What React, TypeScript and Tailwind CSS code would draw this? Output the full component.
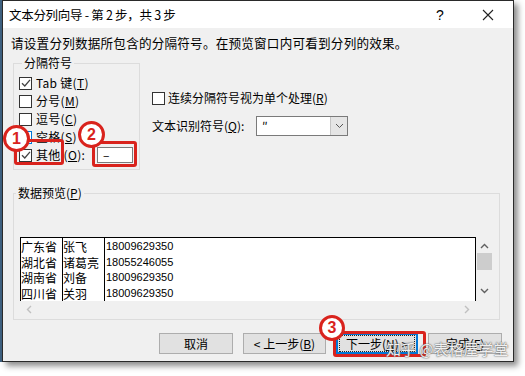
const font = "font-['Noto_Sans_CJK_SC','Noto_Sans',sans-serif]"

const U = ({ c }: { c: string }) => <span className="underline">{c}</span>

function Box({ checked = false, hover = false }: { checked?: boolean; hover?: boolean }) {
  return (
    <div className={`w-[13px] h-[13px] shrink-0 bg-white border ${hover ? 'border-[#0078d7]' : 'border-[#333]'} flex items-center justify-center`}>
      {checked && (
        <svg width="10" height="10" viewBox="0 0 10 10">
          <path d="M1 5.2 L3.8 8 L9 1.8" fill="none" stroke="#444" strokeWidth="1.3" />
        </svg>
      )}
    </div>
  )
}

function Check({ checked, hover, children }: { checked?: boolean; hover?: boolean; children: React.ReactNode }) {
  return (
    <div className="flex items-center h-[18px] gap-[4px] text-[12px] leading-[16px] tracking-[0.3px]">
      <Box checked={checked} hover={hover} />
      <span>{children}</span>
    </div>
  )
}

function Btn({ children, w, focus = false }: { children: React.ReactNode; w: string; focus?: boolean }) {
  return (
    <div className={`${w} h-[21px] flex items-center justify-center bg-[#e1e1e1] text-[12px] leading-[16px] ${focus ? 'border-2 border-[#0078d7]' : 'border border-[#adadad]'}`}>
      {focus ? (
        <div className="w-full h-full mx-[1px] flex items-center justify-center border border-dotted border-[#222]">{children}</div>
      ) : children}
    </div>
  )
}

function Circle({ n, cls }: { n: string; cls: string }) {
  return (
    <div className={`absolute ${cls} rounded-full bg-white border-[3px] border-[#d9231d] flex items-center justify-center text-[#d9231d] font-bold text-[16px] leading-none font-['Liberation_Sans',sans-serif]`}>
      {n}
    </div>
  )
}

const rows = [
  ['广东省', '张飞', '18009629350'],
  ['湖北省', '诸葛亮', '18055246055'],
  ['湖南省', '刘备', '18009629350'],
  ['四川省', '关羽', '18009629350'],
]

export default function App() {
  return (
    <div className={`relative w-[525px] h-[376px] bg-white overflow-hidden text-black ${font}`}>
      <div className="flex">
        <div className="w-[2px] h-[362px] bg-[#3f6282]" />
        <div className="w-[512px] h-[362px] flex flex-col border border-[#2a2a2a] shadow-[4px_4px_6px_rgba(0,0,0,0.45)]">
          <div className="h-[27px] bg-white flex items-center pl-[6px] text-[12.5px] leading-[16px]">
            <span className="flex-1 tracking-[-0.3px]">文本分列向导 - 第 2 步，共 3 步</span>
            <span className="w-[20px] text-center font-['Liberation_Sans',sans-serif] text-[14px]">?</span>
            <svg className="ml-[32px] mr-[19px]" width="12" height="12" viewBox="0 0 12 12">
              <path d="M1 1 L11 11 M11 1 L1 11" stroke="#222" strokeWidth="1.1" />
            </svg>
          </div>
          <div className="flex-1 bg-[#f0f0f0] flex flex-col">
            <p className="pt-[7px] pl-[8px] text-[12.6px] leading-[16px] tracking-[0.2px]">请设置分列数据所包含的分隔符号。在预览窗口内可看到分列的效果。</p>
            <div className="flex mt-[4px] pl-[10px]">
              <fieldset className="w-[127px] h-[115px] border border-[#dcdcdc] pl-[5px]">
                <legend className="ml-[3px] px-[2px] text-[12px] leading-[16px]">分隔符号</legend>
                <div className="pt-[3px]">
                  <Check checked>Tab 键(<U c="T" />)</Check>
                  <Check>分号(<U c="M" />)</Check>
                  <Check>逗号(<U c="C" />)</Check>
                  <Check hover>空格(<U c="S" />)</Check>
                  <div className="flex items-center">
                    <div className="w-[78px]">
                      <Check checked>其他 (<U c="O" />):</Check>
                    </div>
                    <div className="w-[36px] h-[16px] bg-white border border-[#7a7a7a] flex items-center pl-[5px] text-[12px] leading-none">–</div>
                  </div>
                </div>
              </fieldset>
              <div className="ml-[12px] pt-[35px] text-[12px] leading-[16px]">
                <div className="flex items-center h-[16px] gap-[3px]">
                  <Box />
                  <span>连续分隔符号视为单个处理(<U c="R" />)</span>
                </div>
                <div className="flex items-center h-[20px] mt-[10px]">
                  <span className="w-[104px]">文本识别符号(<U c="Q" />):</span>
                  <div className="w-[92px] h-[20px] flex bg-white border border-[#7a7a7a]">
                    <span className="flex-1 pl-[5px] leading-[18px]">″</span>
                    <div className="w-[17px] bg-[#e5e5e5] border-l border-[#c5c5c5] flex items-center justify-center">
                      <svg width="9" height="6" viewBox="0 0 9 6"><path d="M1 1 L4.5 4.5 L8 1" fill="none" stroke="#555" strokeWidth="1" /></svg>
                    </div>
                  </div>
                </div>
              </div>
            </div>
            <fieldset className="ml-[10px] mt-[15px] w-[487px] h-[135px] border border-[#dcdcdc]">
              <legend className="ml-[2px] px-[2px] text-[12px] leading-[16px]">数据预览(<U c="P" />)</legend>
              <div className="mt-[36px] ml-[6px] grid grid-cols-[456px_17px] grid-rows-[64px_16px]">
                <div className="bg-white border-t border-l border-r border-black overflow-hidden grid grid-cols-[42px_42px_1fr]">
                  <div className="border-r border-black pt-[1px]">
                    {rows.map(r => <div key={r[0]} className="h-[15.5px] text-[12px] leading-[15.5px] whitespace-nowrap">{r[0]}</div>)}
                  </div>
                  <div className="border-r border-black pt-[1px]">
                    {rows.map(r => <div key={r[0]} className="h-[15.5px] text-[12px] leading-[15.5px] whitespace-nowrap">{r[1]}</div>)}
                  </div>
                  <div className="pt-[1px] pl-[1px]">
                    {rows.map(r => <div key={r[0]} className="h-[15.5px] text-[11px] leading-[15.5px] font-['Liberation_Sans',sans-serif]">{r[2]}</div>)}
                  </div>
                </div>
                <div className="flex flex-col items-center">
                  <svg className="mt-[6px]" width="9" height="6" viewBox="0 0 9 6"><path d="M1 5 L4.5 1.5 L8 5" fill="none" stroke="#606060" strokeWidth="1.4" /></svg>
                  <div className="mt-[4px] w-[15px] h-[17px] bg-[#cdcdcd]" />
                  <svg className="mt-[18px]" width="9" height="6" viewBox="0 0 9 6"><path d="M1 1 L4.5 4.5 L8 1" fill="none" stroke="#606060" strokeWidth="1.4" /></svg>
                </div>
                <div className="flex items-center justify-between px-[6px]">
                  <svg width="6" height="9" viewBox="0 0 6 9"><path d="M5 1 L1.5 4.5 L5 8" fill="none" stroke="#c0c0c0" strokeWidth="1.4" /></svg>
                  <svg width="6" height="9" viewBox="0 0 6 9"><path d="M1 1 L4.5 4.5 L1 8" fill="none" stroke="#c0c0c0" strokeWidth="1.4" /></svg>
                </div>
                <div />
              </div>
            </fieldset>
            <div className="mt-[13px] pr-[11px] flex justify-end gap-[10px]">
              <Btn w="w-[74px]">取消</Btn>
              <Btn w="w-[83px]">&lt; 上一步(<U c="B" />)</Btn>
              <Btn w="w-[82px]" focus>下一步(<U c="N" />) &gt;</Btn>
              <Btn w="w-[74px]">完成(<U c="F" />)</Btn>
            </div>
          </div>
        </div>
      </div>

      <div className="absolute left-[14px] top-[139px] w-[50px] h-[26px] border-[3px] border-[#d9231d] rounded-[3px]" />
      <div className="absolute left-[92px] top-[141px] w-[45px] h-[26px] border-[3px] border-[#d9231d] rounded-[3px]" />
      <div className="absolute left-[333px] top-[331px] w-[93px] h-[26px] border-[3px] border-[#d9231d] rounded-[3px]" />
      <Circle n="1" cls="left-[3px] top-[125px] w-[27px] h-[27px]" />
      <Circle n="2" cls="left-[78px] top-[121px] w-[27px] h-[27px]" />
      <Circle n="3" cls="left-[319px] top-[315px] w-[26px] h-[26px]" />

      <div className="absolute left-[386px] top-[340px] text-[15px] leading-[18px] text-white/90 [text-shadow:0_0_2px_#666,0_0_1px_#444] whitespace-nowrap">知乎 @表格屋学堂</div>
    </div>
  )
}
